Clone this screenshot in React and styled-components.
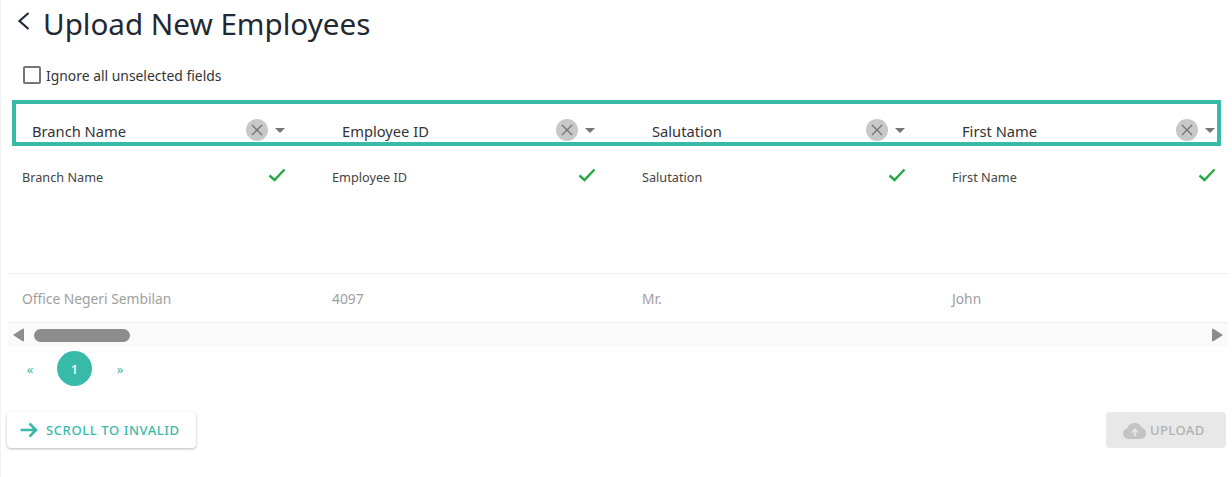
import React from 'react'
import styled, { createGlobalStyle } from 'styled-components'

const columns = [
  { name: 'Branch Name', value: 'Office Negeri Sembilan' },
  { name: 'Employee ID', value: '4097' },
  { name: 'Salutation', value: 'Mr.' },
  { name: 'First Name', value: 'John' },
]

function App() {
  return (
    <>
      <GlobalStyle />
      <Page>
        <TitleRow>
          <BackIcon width="14" height="20" viewBox="0 0 14 20">
            <path d="M12.5 2 L3.5 10 L12.5 18" />
          </BackIcon>
          <Title>Upload New Employees</Title>
        </TitleRow>

        <IgnoreRow>
          <CheckBox />
          <IgnoreLabel>Ignore all unselected fields</IgnoreLabel>
        </IgnoreRow>

        <HeaderBox>
          {columns.map((col) => (
            <HeaderCell key={col.name}>
              <HeaderName>{col.name}</HeaderName>
              <ClearButton>
                <svg width="12" height="12" viewBox="0 0 12 12">
                  <path d="M1 1 L11 11 M11 1 L1 11" stroke="#757575" strokeWidth="1.4" fill="none" />
                </svg>
              </ClearButton>
              <Caret />
            </HeaderCell>
          ))}
        </HeaderBox>

        <Table>
          <MappedRow>
            {columns.map((col) => (
              <MappedCell key={col.name}>
                <MappedName>{col.name}</MappedName>
                <svg width="18" height="14" viewBox="0 0 18 14">
                  <path d="M1.5 7.5 L6.5 12 L16.5 1.5" stroke="#28a745" strokeWidth="2.4" fill="none" />
                </svg>
              </MappedCell>
            ))}
          </MappedRow>
          <DataRow>
            {columns.map((col) => (
              <DataCell key={col.name}>{col.value}</DataCell>
            ))}
          </DataRow>
          <ScrollBar>
            <ScrollArrow width="11" height="14" viewBox="0 0 11 14">
              <path d="M0 7 L10 0.5 Q11 0.5 11 1.5 L11 12.5 Q11 13.5 10 13.5 Z" />
            </ScrollArrow>
            <ScrollThumb />
            <ScrollArrow width="11" height="14" viewBox="0 0 11 14">
              <path d="M11 7 L1 0.5 Q0 0.5 0 1.5 L0 12.5 Q0 13.5 1 13.5 Z" />
            </ScrollArrow>
          </ScrollBar>
        </Table>

        <Pagination>
          <PageLink>«</PageLink>
          <PageCurrent>1</PageCurrent>
          <PageLink>»</PageLink>
        </Pagination>

        <Actions>
          <ScrollButton>
            <svg width="18" height="16" viewBox="0 0 18 16">
              <path d="M0.5 8 L16 8 M9.5 1.5 L16 8 L9.5 14.5" stroke="#37bba8" strokeWidth="2.6" fill="none" />
            </svg>
            SCROLL TO INVALID
          </ScrollButton>
          <UploadButton>
            <svg width="24" height="17" viewBox="0 0 24 17">
              <path
                d="M5.5 17 A5.5 5.5 0 0 1 4.2 6.2 A8 8 0 0 1 19 5.8 A5.8 5.8 0 0 1 18.5 17 Z"
                fill="#c4c4c4"
              />
              <path d="M12 14 L12 8 M9 10.5 L12 7.5 L15 10.5" stroke="#e8e8e8" strokeWidth="1.6" fill="none" />
            </svg>
            UPLOAD
          </UploadButton>
        </Actions>
      </Page>
    </>
  )
}

export default App

const GlobalStyle = createGlobalStyle`
  html, body {
    margin: 0;
    padding: 0;
    background: #fff;
  }

  body {
    font-family: 'Noto Sans', 'Liberation Sans', sans-serif;
  }
`

const Page = styled.div`
  width: 1232px;
  height: 477px;
  box-sizing: border-box;
  overflow: hidden;
  border-left: 1px solid #f2f2f2;
`

const TitleRow = styled.div`
  display: flex;
  align-items: center;
  height: 47px;
  padding-left: 15px;
`

const BackIcon = styled.svg`
  margin-top: -6px;
  fill: none;
  stroke: #1f2a37;
  stroke-width: 2.2;
`

const Title = styled.h1`
  margin: 0 0 0 13px;
  font-size: 29.6px;
  font-weight: 400;
  color: #1f2933;
`

const IgnoreRow = styled.div`
  display: flex;
  align-items: center;
  gap: 5px;
  height: 24px;
  margin-top: 16px;
  padding-left: 22px;
`

const CheckBox = styled.span`
  width: 18px;
  height: 18px;
  box-sizing: border-box;
  border: 2px solid #757575;
  border-radius: 2px;
`

const IgnoreLabel = styled.span`
  font-size: 13.9px;
  color: #333;
`

const HeaderBox = styled.div`
  display: flex;
  box-sizing: border-box;
  width: 1209px;
  height: 46px;
  margin: 13px 0 0 11px;
  border: 4px solid #37bba8;
  overflow: hidden;
`

const HeaderCell = styled.div`
  display: flex;
  flex: 0 0 310px;
  align-items: center;
  box-sizing: border-box;
  padding: 15px 0 0 16px;
`

const HeaderName = styled.span`
  flex: 1;
  font-size: 14.7px;
  color: #333;
`

const ClearButton = styled.span`
  display: flex;
  align-items: center;
  justify-content: center;
  width: 22px;
  height: 22px;
  margin-top: -2px;
  border-radius: 50%;
  background: #c8c8c8;
`

const Caret = styled.span`
  width: 0;
  height: 0;
  margin: 0 41px 0 7px;
  border-left: 5px solid transparent;
  border-right: 5px solid transparent;
  border-top: 5px solid #757575;
`

const Table = styled.div`
  width: 1220px;
  margin-left: 7px;
`

const MappedRow = styled.div`
  display: flex;
  height: 128px;
  box-sizing: border-box;
  border-bottom: 1px solid #eee;
`

const MappedCell = styled.div`
  display: flex;
  flex: 0 0 310px;
  align-items: flex-start;
  justify-content: space-between;
  box-sizing: border-box;
  padding: 22px 32px 0 14px;
`

const MappedName = styled.span`
  font-size: 12.7px;
  color: #444;
`

const DataRow = styled.div`
  display: flex;
  align-items: center;
  height: 49px;
  box-sizing: border-box;
  border-bottom: 1px solid #eee;
`

const DataCell = styled.div`
  flex: 0 0 310px;
  box-sizing: border-box;
  padding-left: 14px;
  font-size: 13.8px;
  color: #9e9e9e;
`

const ScrollBar = styled.div`
  display: flex;
  align-items: center;
  height: 24px;
  padding: 0 5px;
  background: #fafafa;
`

const ScrollArrow = styled.svg`
  flex: none;
  fill: #8c8c8c;

  &:last-child {
    margin-left: auto;
  }
`

const ScrollThumb = styled.span`
  width: 96px;
  height: 13px;
  margin-left: 10px;
  border-radius: 7px;
  background: #8c8c8c;
`

const Pagination = styled.div`
  display: flex;
  align-items: center;
  height: 35px;
  margin: 4px 0 0 24px;
`

const PageLink = styled.span`
  width: 10px;
  font-size: 13px;
  color: #37bba8;
  text-align: center;
`

const PageCurrent = styled.span`
  display: flex;
  align-items: center;
  justify-content: center;
  width: 35px;
  height: 35px;
  margin: 0 23px 0 22px;
  border-radius: 50%;
  background: #37bba8;
  color: #fff;
  font-size: 13px;
  font-weight: 500;
`

const Actions = styled.div`
  display: flex;
  align-items: center;
  justify-content: space-between;
  margin: 26px 6px 0 6px;
`

const ScrollButton = styled.button`
  display: flex;
  align-items: center;
  gap: 8px;
  height: 36px;
  width: 189px;
  padding: 0 0 0 13px;
  border: 0;
  border-radius: 4px;
  background: #fff;
  box-shadow: 0 1px 3px rgba(0, 0, 0, 0.28);
  color: #37bba8;
  font-family: inherit;
  font-size: 13px;
  font-weight: 500;
  letter-spacing: 0.6px;
`

const UploadButton = styled.button`
  display: flex;
  align-items: center;
  gap: 3px;
  height: 36px;
  width: 120px;
  padding: 0 0 0 17px;
  border: 0;
  border-radius: 4px;
  background: #e8e8e8;
  color: #b0b0b0;
  font-family: inherit;
  font-size: 13px;
  font-weight: 500;
  letter-spacing: 0.4px;
`
